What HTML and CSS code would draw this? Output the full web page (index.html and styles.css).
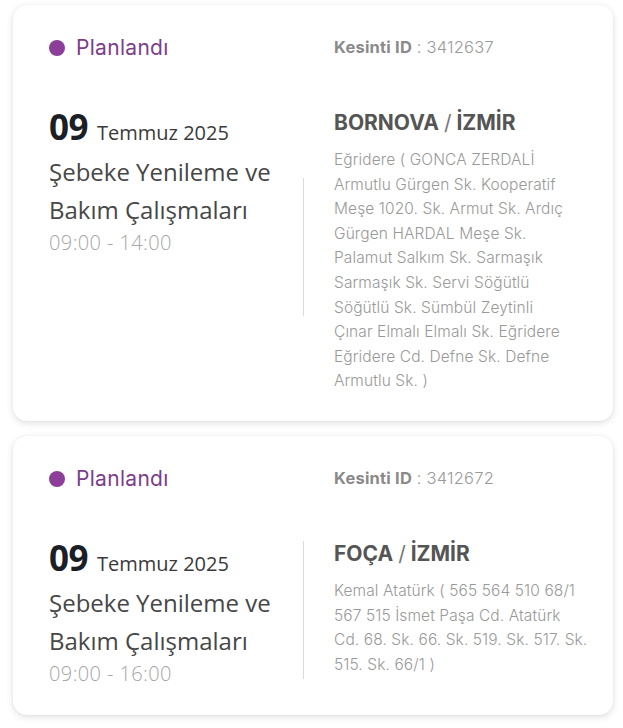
FILE: index.html
```html
<!DOCTYPE html>
<html lang="tr">
<head>
<meta charset="utf-8">
<title>Kesintiler</title>
<link rel="stylesheet" href="styles.css">
</head>
<body>
<div class="list">
  <div class="card">
    <div class="status"><span class="dot"></span>Planlandı</div>
    <div class="outage-id"><b>Kesinti ID</b> : 3412637</div>
    <div class="when">
      <div class="date"><span class="day">09</span> Temmuz 2025</div>
      <div class="title">Şebeke Yenileme ve Bakım Çalışmaları</div>
      <div class="time">09:00 - 14:00</div>
    </div>
    <div class="divider"></div>
    <div class="where">
      <div class="city">BORNOVA <span class="slash">/</span> İZMİR</div>
      <div class="streets">Eğridere ( GONCA ZERDALİ<br>Armutlu Gürgen Sk. Kooperatif<br>Meşe 1020. Sk. Armut Sk. Ardıç<br>Gürgen HARDAL Meşe Sk.<br>Palamut Salkım Sk. Sarmaşık<br>Sarmaşık Sk. Servi Söğütlü<br>Söğütlü Sk. Sümbül Zeytinli<br>Çınar Elmalı Elmalı Sk. Eğridere<br>Eğridere Cd. Defne Sk. Defne<br>Armutlu Sk. )</div>
    </div>
  </div>
  <div class="card">
    <div class="status"><span class="dot"></span>Planlandı</div>
    <div class="outage-id"><b>Kesinti ID</b> : 3412672</div>
    <div class="when">
      <div class="date"><span class="day">09</span> Temmuz 2025</div>
      <div class="title">Şebeke Yenileme ve Bakım Çalışmaları</div>
      <div class="time">09:00 - 16:00</div>
    </div>
    <div class="divider"></div>
    <div class="where">
      <div class="city">FOÇA <span class="slash">/</span> İZMİR</div>
      <div class="streets">Kemal Atatürk ( 565 564 510 68/1<br>567 515 İsmet Paşa Cd. Atatürk<br>Cd. 68. Sk. 66. Sk. 519. Sk. 517. Sk.<br>515. Sk. 66/1 )</div>
    </div>
  </div>
</div>
</body>
</html>
```
FILE: styles.css
```css
html, body {
  margin: 0;
  padding: 0;
  background: #ffffff;
}

.list {
  display: flex;
  flex-direction: column;
  gap: 15px;
  padding: 5px 10px 12px 13px;
  width: 600px;
}

.card {
  background: #ffffff;
  border-radius: 14px;
  box-shadow: 0 2px 7px rgba(0, 0, 0, 0.13), 0 0 2px rgba(0, 0, 0, 0.05);
  padding: 30px 20px 27px 36px;
  display: grid;
  grid-template-columns: 254px 1px 1fr;
  grid-template-rows: auto auto;
  row-gap: 48px;
  align-items: start;
}

.status {
  grid-column: 1;
  display: flex;
  align-items: center;
  gap: 11px;
  font-family: "Inter", "Lato", sans-serif;
  font-size: 21px;
  line-height: 26px;
  font-weight: 400;
  letter-spacing: 0.3px;
  color: #7c3d8b;
}

.dot {
  width: 16px;
  height: 16px;
  border-radius: 50%;
  background: #8c3e98;
}

.outage-id {
  grid-column: 3;
  padding-left: 30px;
  font-family: "Inter", "Lato", sans-serif;
  font-size: 16.5px;
  line-height: 24px;
  font-weight: 300;
  letter-spacing: 0.2px;
  color: #9a9a9a;
}

.outage-id b {
  color: #8a8a8a;
  font-weight: 700;
}

.when {
  grid-column: 1;
  font-family: "Open Sans", "Noto Sans", sans-serif;
}

.date {
  line-height: 36px;
  height: 44px;
  font-size: 20px;
  color: #3a3a3a;
  display: flex;
  align-items: baseline;
  gap: 9px;
}

.day {
  font-size: 35px;
  font-weight: 700;
  color: #1b2026;
  letter-spacing: -0.5px;
}

.title {
  font-size: 24px;
  line-height: 38px;
  color: #474747;
  width: 250px;
}

.time {
  font-size: 20px;
  line-height: 28px;
  font-weight: 300;
  letter-spacing: 0.4px;
  color: #a6a6a6;
}

.divider {
  grid-column: 2;
  align-self: center;
  margin-bottom: 8px;
  width: 1px;
  height: 138px;
  background: #d9d9d9;
}

.where {
  grid-column: 3;
  padding-left: 30px;
  font-family: "Inter", "Lato", sans-serif;
}

.city {
  font-size: 21px;
  line-height: 28px;
  font-weight: 700;
  color: #555555;
}

.slash {
  font-weight: 400;
  color: #777777;
}

.streets {
  margin-top: 11px;
  font-size: 15.5px;
  line-height: 24.6px;
  font-weight: 300;
  letter-spacing: 0.1px;
  color: #999999;
  max-width: 262px;
}
```
